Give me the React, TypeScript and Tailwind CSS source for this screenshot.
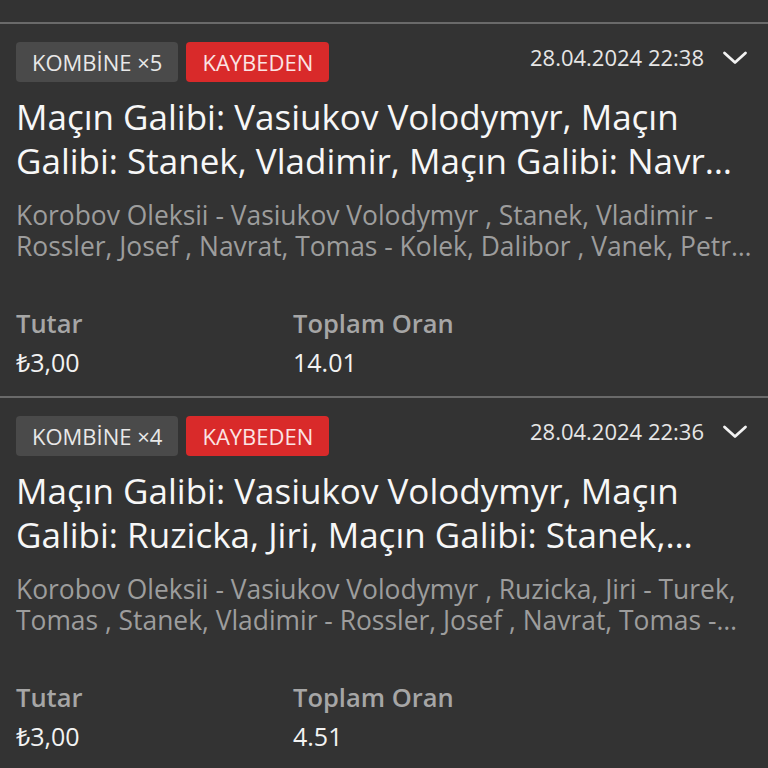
import React from "react";

type Bet = {
  count: number;
  date: string;
  title: string;
  subtitle: string;
  amount: string;
  odds: string;
};

const bets: Bet[] = [
  {
    count: 5,
    date: "28.04.2024 22:38",
    title:
      "Maçın Galibi: Vasiukov Volodymyr, Maçın Galibi: Stanek, Vladimir, Maçın Galibi: Navrat, Tomas, Maçın Galibi: Vanek, Petr, Maçın Galibi: Kolek, Dalibor",
    subtitle:
      "Korobov Oleksii - Vasiukov Volodymyr , Stanek, Vladimir - Rossler, Josef , Navrat, Tomas - Kolek, Dalibor , Vanek, Petr - Stanek, Vladimir , Kolek, Dalibor - Navrat, Tomas",
    amount: "₺3,00",
    odds: "14.01",
  },
  {
    count: 4,
    date: "28.04.2024 22:36",
    title:
      "Maçın Galibi: Vasiukov Volodymyr, Maçın Galibi: Ruzicka, Jiri, Maçın Galibi: Stanek, Vladimir, Maçın Galibi: Navrat, Tomas",
    subtitle:
      "Korobov Oleksii - Vasiukov Volodymyr , Ruzicka, Jiri - Turek, Tomas , Stanek, Vladimir - Rossler, Josef , Navrat, Tomas - Kolek, Dalibor",
    amount: "₺3,00",
    odds: "4.51",
  },
];

function Chevron() {
  return (
    <svg width="26" height="14" viewBox="0 0 26 14" fill="none" className="mt-[9px]">
      <polyline
        points="2.5,2 13,11.5 23.5,2"
        stroke="#f2f2f2"
        strokeWidth="2.8"
        strokeLinecap="round"
        strokeLinejoin="round"
      />
    </svg>
  );
}

function BetCard({ bet }: { bet: Bet }) {
  return (
    <div className="border-t-2 border-[#6a6a6a] pt-[18px] pb-[14px] pl-4 pr-4">
      <div className="flex items-start justify-between">
        <div className="flex gap-2">
          <span className="h-10 leading-[40px] px-4 rounded-[4px] bg-[#4a4a4a] text-[22px] text-[#e8e8e8]">
            KOMBİNE ×{bet.count}
          </span>
          <span className="h-10 leading-[40px] px-4 rounded-[4px] bg-[#d92a2a] text-[22px] text-[#fbe4e4]">
            KAYBEDEN
          </span>
        </div>
        <div className="flex items-start gap-[18px] pr-1">
          <span className="text-[22px] leading-[30px] text-[#e6e6e6]">{bet.date}</span>
          <Chevron />
        </div>
      </div>
      <div className="mt-[13px] mr-[5px] text-[35px] leading-[44px] text-[#f7f7f7] line-clamp-2">
        {bet.title}
      </div>
      <div className="mt-[17px] text-[26.4px] leading-[31px] text-[#9d9d9d] line-clamp-2">
        {bet.subtitle}
      </div>
      <div className="mt-[42px] flex">
        <div className="w-[277px]">
          <div className="text-[25.5px] leading-[39px] font-semibold text-[#a6a6a6]">Tutar</div>
          <div className="text-[25px] leading-[39px] text-[#f2f2f2]">{bet.amount}</div>
        </div>
        <div>
          <div className="text-[25.5px] leading-[39px] font-semibold text-[#a6a6a6]">Toplam Oran</div>
          <div className="text-[25px] leading-[39px] text-[#f2f2f2]">{bet.odds}</div>
        </div>
      </div>
    </div>
  );
}

export default function App() {
  return (
    <div
      className="min-h-[768px] w-[768px] bg-[#333333] overflow-hidden"
      style={{ fontFamily: '"Open Sans", "Noto Sans", sans-serif' }}
    >
      <div className="h-[22px]" />
      {bets.map((b, i) => (
        <BetCard key={i} bet={b} />
      ))}
    </div>
  );
}
